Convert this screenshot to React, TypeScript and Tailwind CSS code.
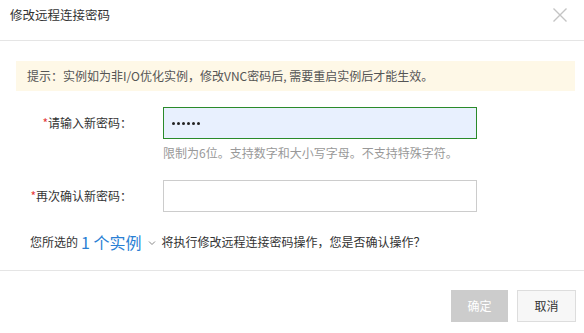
import React from 'react';

const font = { fontFamily: '"Noto Sans CJK SC", "Liberation Sans", sans-serif' };

const Label: React.FC<{ text: string }> = ({ text }) => (
  <div className="w-[116px] shrink-0 text-right text-[12px] text-[#333]">
    <span className="text-[#e4393c]">*</span>
    {text}
  </div>
);

const App: React.FC = () => {
  return (
    <div className="w-[584px] h-[333px] bg-white overflow-hidden" style={font}>
      {/* Header */}
      <div className="h-[41px] border-b border-[#e5e5e5] flex items-start justify-between pl-[10px] pr-[16px] pt-[7px]">
        <div className="text-[12.5px] leading-[16px] text-[#333]">修改远程连接密码</div>
        <svg width="16" height="16" viewBox="0 0 16 16">
          <path d="M1.5 1.5 L14.5 14.5 M14.5 1.5 L1.5 14.5" stroke="#c4c4c4" strokeWidth="1.4" fill="none" />
        </svg>
      </div>

      {/* Body */}
      <div className="pl-4 pr-[9px] pt-[20px] pb-[18px] border-b border-[#e5e5e5]">
        <div className="h-[30px] bg-[#fef8e7] flex items-center pl-[11px] text-[12px] text-[#555]">
          提示：实例如为非I/O优化实例，修改VNC密码后, 需要重启实例后才能生效。
        </div>

        <div className="mt-[16px] flex items-center">
          <Label text="请输入新密码：" />
          <div className="ml-[31px] w-[314px] h-[32px] border border-[#2a8a2a] bg-[#e8f0fe] flex items-center gap-[2px] pl-[8px]">
            {[0, 1, 2, 3, 4, 5].map((i) => (
              <span key={i} className="w-[3px] h-[3px] rounded-full bg-[#222]" />
            ))}
          </div>
        </div>
        <div className="ml-[147px] mt-[6px] text-[12px] leading-[16px] text-[#999]">
          限制为6位。支持数字和大小写字母。不支持特殊字符。
        </div>

        <div className="mt-[19px] flex items-center">
          <Label text="再次确认新密码：" />
          <div className="ml-[31px] w-[314px] h-[32px] border border-[#cccccc] bg-white" />
        </div>

        <div className="mt-[20px] h-[20px] flex items-center pl-[14px] text-[12px] text-[#333]">
          <span>您所选的</span>
          <span className="ml-[3px] text-[16px] text-[#2a7fd4]">1 个实例</span>
          <svg width="8" height="6" viewBox="0 0 8 6" className="ml-[7px] mt-[2px]">
            <path d="M1 1.5 L4 4.5 L7 1.5" stroke="#888" strokeWidth="1" fill="none" />
          </svg>
          <span className="ml-[5px]">将执行修改远程连接密码操作，您是否确认操作？</span>
        </div>
      </div>

      {/* Footer */}
      <div className="flex justify-end gap-[9px] pt-[19px] pr-[8px]">
        <button className="w-[57px] h-[32px] bg-[#cccccc] text-white text-[12px]">确定</button>
        <button className="w-[59px] h-[32px] bg-[#f7f7f7] border border-[#dddddd] text-[#333] text-[12px]">取消</button>
      </div>
    </div>
  );
};

export default App;
